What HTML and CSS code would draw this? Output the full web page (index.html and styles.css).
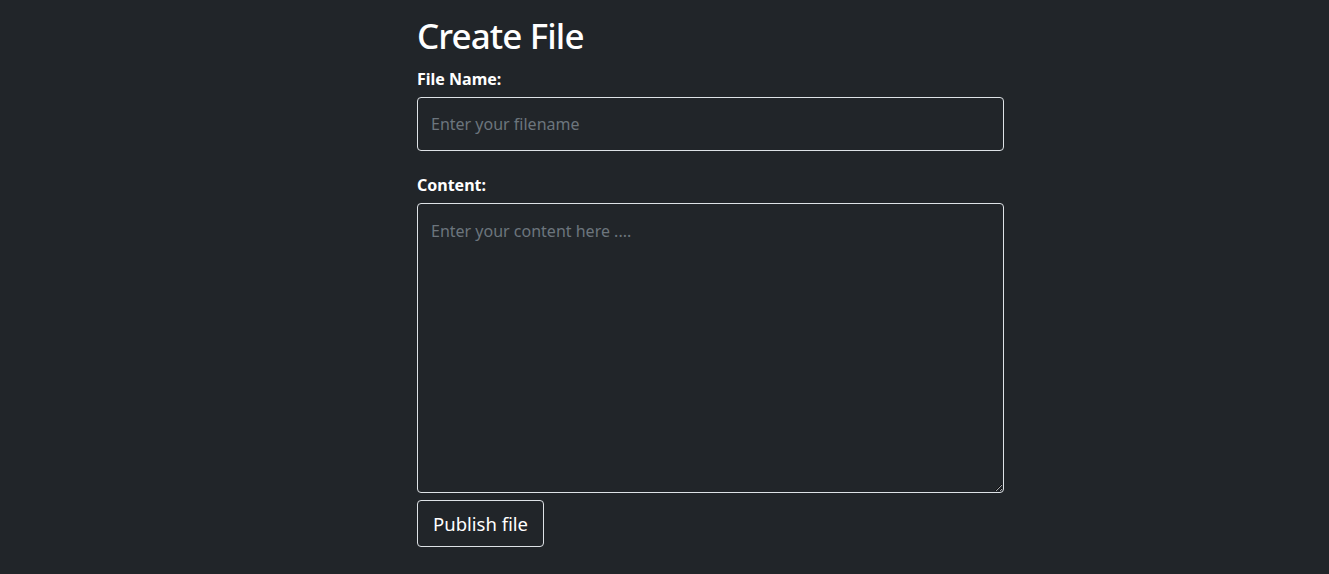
FILE: index.html
```html
<!DOCTYPE html>
<html lang="en">
<head>
<meta charset="utf-8">
<title>Create File</title>
<link rel="stylesheet" href="styles.css">
</head>
<body>
<main class="page">
  <form class="form">
    <h1 class="title">Create File</h1>
    <label class="label" for="filename">File Name:</label>
    <input class="field field-input" id="filename" type="text" placeholder="Enter your filename">
    <label class="label label-gap" for="content">Content:</label>
    <textarea class="field field-area" id="content" placeholder="Enter your content here ...."></textarea>
    <button class="btn" type="button">Publish file</button>
  </form>
</main>
</body>
</html>
```

FILE: styles.css
```css
* { box-sizing: border-box; }
html, body {
  margin: 0;
  background: #212529;
  height: 100%;
}
body {
  font-family: "Noto Sans", "Open Sans", sans-serif;
  color: #fff;
}
.page {
  padding: 12px 0 0 417px;
}
.form {
  width: 587px;
  display: flex;
  flex-direction: column;
  align-items: flex-start;
}
.title {
  margin: 0 0 7px;
  font-size: 35px;
  letter-spacing: -0.9px;
  line-height: 48px;
  font-weight: 500;
}
.label {
  font-size: 16px;
  line-height: 24px;
  font-weight: 700;
  margin-bottom: 6px;
}
.label-gap { margin-top: 22px; }
.field {
  width: 100%;
  background: #212529;
  border: 1px solid #dee2e6;
  border-radius: 4px;
  color: #fff;
  font-family: inherit;
  font-size: 16px;
  padding: 0 13px;
  outline: none;
}
.field::placeholder { color: #6c757d; opacity: 1; }
.field-input { height: 54px; }
.field-area {
  height: 290px;
  padding-top: 14px;
  line-height: 26px;
  resize: vertical;
}
.btn {
  margin-top: 7px;
  height: 47px;
  padding: 0 15px;
  background: transparent;
  border: 1px solid #dee2e6;
  border-radius: 4px;
  color: #fff;
  font-family: inherit;
  font-size: 18.5px;
}
```
